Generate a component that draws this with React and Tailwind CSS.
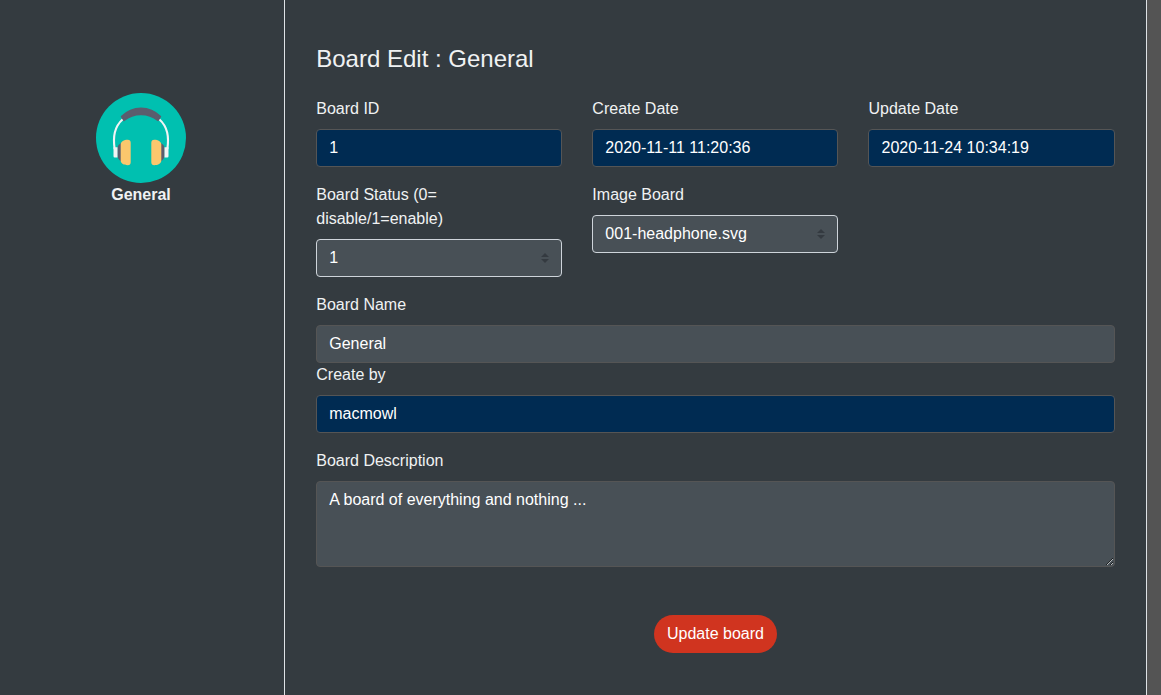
import React from "react";

const control =
  "block w-full h-[38px] px-3 py-1.5 border rounded-[4px] text-base leading-6 text-white outline-none";
const readOnlyControl = `${control} bg-[#002b52] border-[#555555]`;
const editableControl = `${control} bg-[#485056] border-[#555555]`;

function Headphones() {
  return (
    <svg className="block size-[90px]" viewBox="0 0 90 90" fill="none">
      <circle cx="45" cy="45" r="45" fill="#00c0b0" />
      <path d="M18.6 56C17 44 18 34 27 26M71.4 56C73 44 72 34 63 26" stroke="#f1f4f5" strokeWidth="2.1" />
      <path d="M25.6 23.6C36.5 12.5 53.5 12.5 64.4 23.6L62 27.4C52 19.3 38 19.3 28 27.4Z" fill="#5b5d6e" stroke="#5b5d6e" strokeWidth="1.6" strokeLinejoin="round" />
      <path d="M25.5 50C22.8 51 21.3 53 21.3 56v6c0 3 1.5 5 4.2 6.500zM64.500 50C67.200 51 68.700 53 68.700 56v6c0 3-1.500 5-4.200 6.500z" fill="#5b5d6e" />
      <path d="M24.7 51.5c0-3 3.3-4.800 7-4.800a3 3 0 0 1 3 3v19.500a3 3 0 0 1-3 3c-3.700 0-7-1.700-7-4.700zM65.300 51.500c0-3-3.300-4.800-7-4.800a3 3 0 0 0-3 3v19.500a3 3 0 0 0 3 3c3.700 0 7-1.700 7-4.700z" fill="#fbc76d" />
      <path d="M17.500 54.300h4v10.200h-2.800a1.200 1.200 0 0 1-1.200-1.200zM72.500 54.300h-4v10.200h2.800a1.200 1.200 0 0 0 1.200-1.200z" fill="#f1f4f5" />
    </svg>
  );
}

function Field({ label, children }) {
  return (
    <label className="block">
      <span className="mb-2 block leading-6">{label}</span>
      {children}
    </label>
  );
}

function Select({ value }) {
  return (
    <div className="relative">
      <select
        defaultValue={value}
        className="block h-[38px] w-full appearance-none rounded-[4px] border border-[#ced4da] bg-[#485056] py-1.5 pr-7 pl-3 text-base leading-6 text-white outline-none"
      >
        <option>{value}</option>
      </select>
      <svg className="pointer-events-none absolute top-[14px] right-[13px] h-[10px] w-2" viewBox="0 0 4 5">
        <path fill="#343a40" d="M2 0L0 2h4zm0 5L0 3h4z" />
      </svg>
    </div>
  );
}

export default function App() {
  return (
    <div className="flex h-screen overflow-hidden bg-[#545454] font-['Liberation_Sans',Arial,sans-serif] text-base text-[#f0f2f3]">
      <aside className="flex w-[284px] shrink-0 flex-col items-center bg-[#343b40] pt-[93px] pr-[3px]">
        <Headphones />
        <b className="pl-px leading-6 font-bold">General</b>
      </aside>
      <main className="w-[863px] shrink-0 border-x border-[#dee2e6] bg-[#343b40] pt-[44px] pr-[31.4px] pl-[31.25px]">
        <h1 className="text-2xl leading-[29px]">Board Edit : General</h1>
        <form className="mt-6 flex flex-col" onSubmit={(e) => e.preventDefault()}>
          <div className="grid grid-cols-3 gap-x-[30px] gap-y-4">
            <Field label="Board ID">
              <input readOnly defaultValue="1" className={readOnlyControl} />
            </Field>
            <Field label="Create Date">
              <input readOnly defaultValue="2020-11-11 11:20:36" className={readOnlyControl} />
            </Field>
            <Field label="Update Date">
              <input readOnly defaultValue="2020-11-24 10:34:19" className={readOnlyControl} />
            </Field>
            <Field label="Board Status (0= disable/1=enable)">
              <Select value="1" />
            </Field>
            <Field label="Image Board">
              <Select value="001-headphone.svg" />
            </Field>
          </div>
          <div className="mt-4">
            <Field label="Board Name">
              <input defaultValue="General" className={editableControl} />
            </Field>
            <Field label="Create by">
              <input readOnly defaultValue="macmowl" className={readOnlyControl} />
            </Field>
          </div>
          <div className="mt-4">
            <Field label="Board Description">
              <textarea
                defaultValue="A board of everything and nothing ..."
                className="block h-[86px] w-full resize-y rounded-[4px] border border-[#555555] bg-[#485056] px-3 py-1.5 text-base leading-6 text-white outline-none"
              />
            </Field>
          </div>
          <button className="mt-12 h-[38px] self-center rounded-full bg-[#d0341f] px-[13px] leading-6 text-white">
            Update board
          </button>
        </form>
      </main>
    </div>
  );
}
